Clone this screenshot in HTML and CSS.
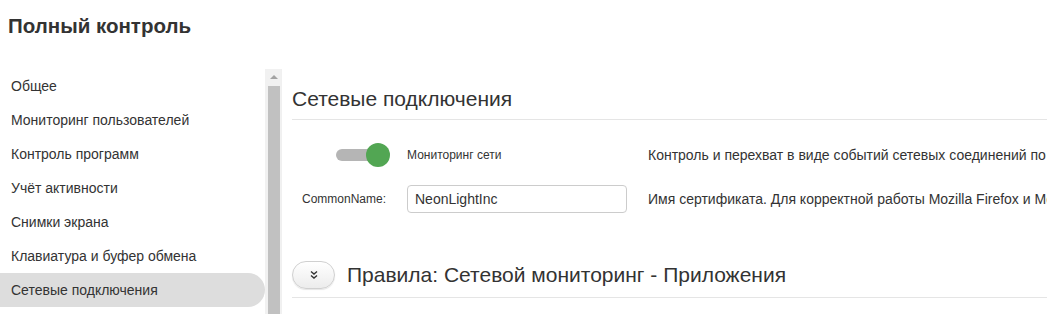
FILE: index.html
```html
<!DOCTYPE html>
<html lang="ru">
<head>
  <meta charset="UTF-8" />
  <title>Полный контроль</title>
  <link rel="stylesheet" href="styles.css">
</head>
<body>

<h1 class="page-title">Полный контроль</h1>

<div class="layout">
  <div class="sidebar">
    <ul class="menu">
      <li>Общее</li>
      <li>Мониторинг пользователей</li>
      <li>Контроль программ</li>
      <li>Учёт активности</li>
      <li>Снимки экрана</li>
      <li>Клавиатура и буфер обмена</li>
      <li class="active">Сетевые подключения</li>
    </ul>
    <div class="scrollbar">
      <div class="scroll-arrow"></div>
      <div class="scroll-thumb"></div>
    </div>
  </div>

  <div class="main">
    <h2 class="section-title">Сетевые подключения</h2>

    <div class="form">
      <div class="cell-label">
        <span class="toggle"><span class="toggle-knob"></span></span>
      </div>
      <div class="cell-control small">Мониторинг сети</div>
      <div class="cell-desc">Контроль и перехват в виде событий сетевых соединений по протоколам HTTP и HTTPS</div>

      <div class="cell-label small pad">CommonName:</div>
      <div class="cell-control"><input type="text" value="NeonLightInc"></div>
      <div class="cell-desc">Имя сертификата. Для корректной работы Mozilla Firefox и Mozilla Thunderbird</div>
    </div>

    <div class="rules">
      <button class="expand-btn">
        <svg width="10" height="10" viewBox="0 0 10 10">
          <path d="M2 1.5 L5 4 L8 1.5 M2 5.5 L5 8 L8 5.5" fill="none" stroke="#333" stroke-width="1.4"/>
        </svg>
      </button>
      <span class="rules-title">Правила: Сетевой мониторинг - Приложения</span>
    </div>
  </div>
</div>

</body>
</html>
```

FILE: styles.css
```css
body {
  margin: 0;
  font-family: 'Liberation Sans', Arial, sans-serif;
  color: #333;
  background: white;
  overflow: hidden;
}

.page-title {
  margin: 0;
  padding: 14px 8px 0;
  height: 55px;
  font-size: 20.5px;
  font-weight: bold;
  line-height: 24px;
}

.layout {
  display: flex;
}

.sidebar {
  display: flex;
  width: 282px;
  flex-shrink: 0;
}

.menu {
  list-style: none;
  margin: 0;
  padding: 0;
  width: 265px;
}

.menu li {
  height: 34px;
  line-height: 34px;
  padding-left: 11px;
  font-size: 14px;
}

.menu li.active {
  background: #ddd;
  border-radius: 0 17px 17px 0;
}

.scrollbar {
  width: 17px;
  background: #f1f1f1;
  height: 260px;
}

.scroll-arrow {
  height: 17px;
  position: relative;
}

.scroll-arrow::after {
  content: "";
  position: absolute;
  left: 5px;
  top: 6px;
  border-left: 4px solid transparent;
  border-right: 4px solid transparent;
  border-bottom: 4px solid #a3a3a3;
}

.scroll-thumb {
  margin: 0 2px 0 3px;
  background: #c1c1c1;
  height: 240px;
}

.main {
  flex: 1;
  min-width: 0;
  overflow: hidden;
  padding-left: 10px;
  border-left: 1px solid #f0f0f0;
  margin-left: -1px;
}

.section-title {
  margin: 18px 0 0;
  padding-bottom: 8px;
  font-size: 21px;
  font-weight: normal;
  line-height: 24px;
  border-bottom: 1px solid #e5e5e5;
}

.form {
  display: grid;
  grid-template-columns: 98px 220px 1fr;
  column-gap: 17px;
  row-gap: 18px;
  align-items: center;
  margin-top: 23px;
  white-space: nowrap;
}

.cell-desc {
  font-size: 14px;
  padding-left: 4px;
  overflow: hidden;
}

.cell-label {
  text-align: right;
}

.small {
  font-size: 12px;
}

.pad {
  padding-right: 4px;
}

.toggle {
  display: inline-block;
  position: relative;
  width: 54px;
  height: 24px;
  vertical-align: middle;
}

.toggle::before {
  content: "";
  position: absolute;
  left: 0;
  top: 6px;
  width: 44px;
  height: 12px;
  border-radius: 6px;
  background: #b5b5b5;
}

.toggle-knob {
  position: absolute;
  right: 0;
  top: 0;
  width: 24px;
  height: 24px;
  border-radius: 50%;
  background: #52a653;
}

input {
  width: 220px;
  height: 28px;
  box-sizing: border-box;
  padding: 0 7px;
  border: 1px solid #ccc;
  border-radius: 4px;
  font-family: inherit;
  font-size: 14px;
  color: #333;
}

.rules {
  display: flex;
  align-items: center;
  gap: 12px;
  margin-top: 48px;
  padding-bottom: 8px;
  border-bottom: 1px solid #e5e5e5;
}

.expand-btn {
  width: 43px;
  height: 28px;
  border: 1px solid #d0d0d0;
  border-radius: 14px;
  background: linear-gradient(#fff, #ececec);
  box-shadow: 0 1px 1px rgba(0,0,0,0.1);
  padding: 0;
  display: flex;
  align-items: center;
  justify-content: center;
}

.rules-title {
  font-size: 21px;
  line-height: 24px;
}
```
